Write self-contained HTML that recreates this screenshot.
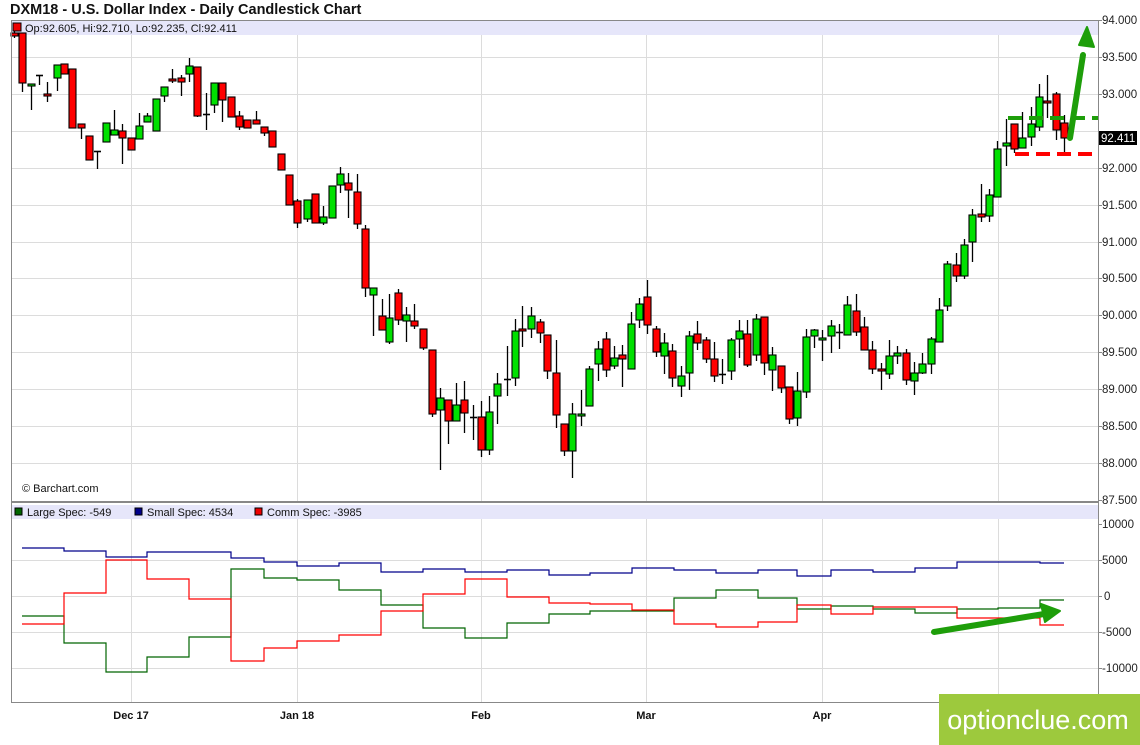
<!DOCTYPE html>
<html><head><meta charset="utf-8">
<style>
html,body{margin:0;padding:0;background:#fff;width:1140px;height:745px;overflow:hidden;font-family:"Liberation Sans",Arial,sans-serif}
svg{position:absolute;left:0;top:0}
</style></head><body>
<svg id="s" width="1140" height="745" xmlns="http://www.w3.org/2000/svg" font-family="Liberation Sans, Arial, sans-serif">
<text x="10" y="14" font-size="14.5" font-weight="bold" fill="#111">DXM18 - U.S. Dollar Index - Daily Candlestick Chart</text>
<rect x="11" y="20" width="1087" height="15" fill="#e6e6fa"/>
<rect x="11" y="505" width="1087" height="14" fill="#e6e6fa"/>
<g stroke="#dcdcdc" stroke-width="1" id="grid"></g>
<g id="lines" fill="none" stroke-width="1.2"></g>
<g id="candles"></g>
<rect x="11.5" y="20.5" width="1087" height="481" fill="none" stroke="#888"/>
<rect x="11.5" y="502.5" width="1087" height="200" fill="none" stroke="#888"/>
<rect x="13" y="23" width="8" height="8" fill="#e00" stroke="#000"/>
<text x="25" y="32" font-size="11" fill="#111">Op:92.605, Hi:92.710, Lo:92.235, Cl:92.411</text>
<text x="22" y="492" font-size="11" fill="#111">© Barchart.com</text>
<rect x="15" y="508" width="7" height="7" fill="#006400" stroke="#000"/>
<text x="27" y="516" font-size="11" fill="#111">Large Spec: -549</text>
<rect x="135" y="508" width="7" height="7" fill="#00008b" stroke="#000"/>
<text x="147" y="516" font-size="11" fill="#111">Small Spec: 4534</text>
<rect x="255" y="508" width="7" height="7" fill="#e00" stroke="#000"/>
<text x="267" y="516" font-size="11" fill="#111">Comm Spec: -3985</text>
<g id="axis" font-size="11.5" fill="#222"></g>
<g font-size="11" font-weight="bold" fill="#111" text-anchor="middle">
<text x="131" y="719">Dec 17</text><text x="297" y="719">Jan 18</text><text x="481" y="719">Feb</text><text x="646" y="719">Mar</text><text x="822" y="719">Apr</text>
</g>
<rect x="1099" y="131" width="38" height="14" fill="#000"/>
<text x="1101" y="142" font-size="11.5" fill="#fff">92.411</text>
<line x1="1008" y1="118" x2="1098" y2="118" stroke="#1e9e0a" stroke-width="4" stroke-dasharray="14,7"/>
<line x1="1015" y1="154" x2="1097" y2="154" stroke="#f00" stroke-width="4" stroke-dasharray="14,7"/>
<line x1="1070" y1="138" x2="1083" y2="55" stroke="#1e9e0a" stroke-width="6" stroke-linecap="round"/>
<polygon points="1087,27 1079,45 1094,47" fill="#1e9e0a" stroke="#1e9e0a" stroke-width="2" stroke-linejoin="round"/>
<line x1="934" y1="632" x2="1044" y2="614" stroke="#1e9e0a" stroke-width="6" stroke-linecap="round"/>
<polygon points="1060,611 1041,604 1045,622" fill="#1e9e0a" stroke="#1e9e0a" stroke-width="2" stroke-linejoin="round"/>
<rect x="939" y="694" width="201" height="51" fill="#9dc93d"/>
<text x="1038" y="729" font-size="27" fill="#fff" text-anchor="middle">optionclue.com</text>
</svg>
<script>
var NS="http://www.w3.org/2000/svg";
function el(p,t,a){var e=document.createElementNS(NS,t);for(var k in a)e.setAttribute(k,a[k]);document.getElementById(p).appendChild(e);return e;}
[131,297,481,646,822,998].forEach(function(x){el("grid","line",{x1:x+.5,y1:35,x2:x+.5,y2:501});el("grid","line",{x1:x+.5,y1:519,x2:x+.5,y2:702});});
var pl=["94.000","93.500","93.000","92.500","92.000","91.500","91.000","90.500","90.000","89.500","89.000","88.500","88.000","87.500"];
for(var i=0;i<14;i++){var y=Math.round(20+i*36.92);if(i>0&&i<13)el("grid","line",{x1:11,y1:y+.5,x2:1098,y2:y+.5});
 el("axis","line",{x1:1098,y1:y+.5,x2:1102,y2:y+.5,stroke:"#888"});
 if(i!=3)el("axis","text",{x:1102,y:y+4}).textContent=pl[i];}
var ll=["10000","5000","0","-5000","-10000"];
for(var i=0;i<5;i++){var y=524+i*36;if(i>0)el("grid","line",{x1:11,y1:y+.5,x2:1098,y2:y+.5});
 el("axis","line",{x1:1098,y1:y+.5,x2:1102,y2:y+.5,stroke:"#888"});
 el("axis","text",{x:(i==2?1104:1102),y:y+4}).textContent=ll[i];}
var X=[64,106,147,189,231,264,297,339,381,423,465,507,549,590,632,674,716,758,797,831,873,915,957,998,1040];
function fin(a){var d="M22,"+a[0];for(var i=0;i<X.length;i++){d+=" H"+X[i]+" V"+a[i+1];}d+=" H1064";return d;}
el("lines","path",{d:fin([616,643,672,657,637,569,578,580,590,605,628,638,623,614,611,611,598,590,598,609,606,609,613,609,608,600]),stroke:"#006400"});
el("lines","path",{d:fin([624,593,560,579,599,661,648,641,635,611,594,579,597,603,604,610,624,627,622,605,614,607,607,618,618,625]),stroke:"#f00"});
el("lines","path",{d:fin([548,551,557,552,552,558,562,566,563,572,569,572,570,575,573,568,570,573,570,576,570,572,568,562,562,563]),stroke:"#00008b"});
var C=[[14,33,36,31,38,0],[22,33,83,33,92,0],[31,84,86,84,110,1],[39,75,75,75,85,2],[47,94,96,82,102,0],[57,65,78,65,91,1],[64,64,74,64,74,0],[72,69,128,69,128,0],[81,124,128,124,139,0],[89,136,160,136,160,0],[97,151,151,151,169,2],[106,123,142,123,142,1],[114,130,135,110,135,1],[122,131,138,124,164,0],[131,138,150,138,150,0],[139,126,139,113,139,1],[147,116,122,113,122,1],[156,99,131,99,131,1],[164,87,96,87,102,1],[172,79,81,69,83,0],[181,78,82,75,96,0],[189,66,74,58,82,1],[197,67,116,67,117,0],[206,114,114,93,130,2],[214,83,105,83,113,1],[222,83,100,83,122,0],[231,97,117,97,117,0],[239,116,127,111,130,0],[247,120,128,120,128,0],[256,120,124,111,124,0],[264,127,133,127,136,0],[272,131,147,131,147,0],[281,154,170,154,170,0],[289,175,205,175,205,0],[297,201,223,199,228,0],[307,200,219,200,222,1],[315,194,223,194,223,0],[323,217,223,206,225,1],[332,186,218,186,218,1],[340,174,185,167,193,1],[348,183,190,173,218,0],[357,192,224,174,229,0],[365,229,288,225,297,0],[373,288,295,288,336,1],[382,316,330,299,330,0],[389,318,342,294,344,1],[398,293,320,289,325,0],[406,315,321,307,342,1],[414,321,326,304,329,0],[423,329,348,329,350,0],[432,350,414,350,417,0],[440,398,410,388,470,1],[448,400,421,400,444,0],[456,405,421,383,421,1],[464,400,413,381,433,0],[473,417,417,405,440,2],[481,417,450,401,457,0],[489,412,450,396,455,1],[497,384,396,373,424,1],[507,379,379,346,396,2],[515,331,378,319,386,1],[522,329,331,306,347,0],[531,316,329,307,338,1],[540,322,333,319,343,0],[547,335,371,335,379,0],[556,373,415,340,428,0],[564,424,451,424,456,0],[572,414,451,403,478,1],[581,414,416,390,426,1],[589,369,406,366,406,1],[598,349,364,341,381,1],[606,339,370,332,377,0],[614,358,366,346,369,1],[622,355,359,345,387,0],[631,324,369,312,369,1],[639,304,320,298,328,1],[647,297,325,280,334,0],[656,329,352,326,357,0],[664,343,356,333,374,1],[672,351,378,344,387,0],[681,376,386,366,397,1],[689,336,373,331,390,1],[697,334,343,321,350,0],[706,340,359,337,363,0],[714,359,376,342,382,0],[722,374,374,359,384,2],[731,340,371,338,380,1],[739,331,339,320,358,1],[747,334,365,320,367,0],[756,319,355,314,361,1],[764,317,363,317,375,0],[772,355,370,347,391,1],[781,366,388,366,393,0],[789,387,419,387,424,0],[797,391,418,372,426,1],[806,337,392,329,398,1],[814,330,336,329,348,1],[822,338,340,330,361,1],[831,326,336,320,353,1],[839,332,332,324,349,2],[847,305,335,296,335,1],[856,311,332,294,336,0],[864,327,350,317,350,0],[872,350,369,341,374,0],[881,369,371,363,390,0],[889,356,374,340,379,1],[897,353,356,346,364,1],[906,353,380,349,385,0],[914,373,381,362,395,1],[922,364,373,353,374,1],[931,339,364,337,374,1],[939,310,342,298,342,1],[947,264,306,261,311,1],[956,265,276,253,282,0],[964,245,276,239,279,1],[972,215,242,209,262,1],[981,214,217,184,222,0],[989,195,216,189,222,1],[997,149,197,141,197,1],[1006,143,146,119,166,1],[1014,124,149,124,153,0],[1022,138,148,112,148,1],[1031,124,137,107,146,1],[1039,97,127,84,131,1],[1047,101,103,75,118,0],[1056,94,130,92,140,0],[1064,123,138,115,154,0]];
C.forEach(function(c){var x=c[0]+.5;
 el("candles","line",{x1:x,y1:c[3],x2:x,y2:c[4],stroke:"#000","stroke-width":1.3});
 if(c[5]==2||c[2]-c[1]<1){el("candles","line",{x1:x-3.5,y1:c[1]+.5,x2:x+3.5,y2:c[1]+.5,stroke:"#000","stroke-width":1.6});}
 else el("candles","rect",{x:x-3.5,y:c[1],width:7,height:Math.max(2,c[2]-c[1]),fill:c[5]?"#00e000":"#f00",stroke:"#000","stroke-width":1.1});
});
</script>
</body></html>
